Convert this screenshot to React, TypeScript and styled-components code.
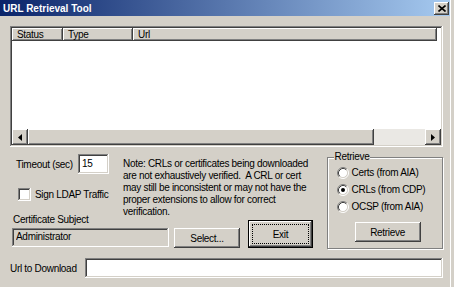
import React from "react";
import styled, { createGlobalStyle, css } from "styled-components";

const GlobalStyle = createGlobalStyle`
  html, body {
    margin: 0;
    padding: 0;
    background: #d4d0c8;
    overflow: hidden;
  }
  body {
    font-family: "Liberation Sans", Arial, sans-serif;
  }
  * {
    box-sizing: border-box;
  }
`;

const raised = css`
  background: #d4d0c8;
  box-shadow: inset -1px -1px #404040, inset 1px 1px #fff, inset -2px -2px #808080,
    inset 2px 2px #d4d0c8;
`;

const sunken = css`
  box-shadow: inset -1px -1px #fff, inset 1px 1px #808080, inset -2px -2px #d4d0c8,
    inset 2px 2px #404040;
`;

const Frame = styled.div`
  width: 454px;
  height: 287px;
  display: flex;
  background: #d4d0c8;
`;

const Window = styled.div`
  width: 451px;
  border-right: 1px solid #fff;
  display: flex;
  flex-direction: column;
`;

const TitleBar = styled.div`
  height: 16px;
  display: flex;
  align-items: center;
  justify-content: space-between;
  padding: 0 1px 0 3px;
  background: linear-gradient(90deg, #0a246a, #a6caf0);
`;

const TitleText = styled.span`
  color: #fff;
  font-weight: bold;
  font-size: 10px;
`;

const CloseButton = styled.div`
  ${raised};
  width: 15px;
  height: 13px;
  display: flex;
  align-items: center;
  justify-content: center;
`;

const Body = styled.div`
  flex: 1;
  display: flex;
  flex-direction: column;
  padding: 10px 7px 0 10px;
  font-size: 10px;
  letter-spacing: -0.3px;
  color: #000;
`;

const ListView = styled.div`
  ${sunken};
  background: #fff;
  height: 121px;
  padding: 2px;
  display: flex;
  flex-direction: column;
`;

const HeaderRow = styled.div`
  display: flex;
  height: 13px;
`;

const HeaderCell = styled.div<{ $w: number }>`
  ${raised};
  width: ${(p) => p.$w}px;
  padding-left: 5px;
  line-height: 13px;
  white-space: nowrap;
`;

const ListRows = styled.div`
  flex: 1;
`;

const HScroll = styled.div`
  display: flex;
  height: 16px;
`;

const ScrollButton = styled.div`
  ${raised};
  width: 16px;
  display: flex;
  align-items: center;
  justify-content: center;
`;

const Thumb = styled.div<{ $w: number }>`
  ${raised};
  width: ${(p) => p.$w}px;
`;

const Track = styled.div`
  flex: 1;
  background: #eae8e4;
`;

const Middle = styled.div`
  display: flex;
  margin-top: 4px;
  height: 98px;
`;

const LeftPane = styled.div`
  width: 314px;
  display: flex;
  flex-direction: column;
`;

const TopRow = styled.div`
  display: flex;
  height: 63px;
`;

const OptionsCol = styled.div`
  width: 113px;
  display: flex;
  flex-direction: column;
`;

const FieldRow = styled.div`
  display: flex;
  align-items: center;
  margin-top: 3px;
  padding-left: 6px;
`;

const FieldLabel = styled.span<{ $w: number }>`
  width: ${(p) => p.$w}px;
  white-space: nowrap;
`;

const TextBox = styled.input<{ $w?: number; $h?: number; $disabled?: boolean }>`
  ${sunken};
  border: none;
  outline: none;
  margin: 0;
  flex: ${(p) => (p.$w ? "none" : "1")};
  width: ${(p) => (p.$w ? `${p.$w}px` : "auto")};
  height: ${(p) => p.$h ?? 20}px;
  padding: 0 3px 2px 4px;
  font: inherit;
  letter-spacing: inherit;
  color: #000;
  background: ${(p) => (p.$disabled ? "#d4d0c8" : "#fff")};
`;

const CheckRow = styled.label`
  display: flex;
  align-items: center;
  margin-top: 14px;
  padding-left: 8px;
  white-space: nowrap;
`;

const CheckBox = styled.span`
  ${sunken};
  background: #fff;
  width: 13px;
  height: 13px;
  margin-right: 4px;
`;

const Note = styled.div`
  padding-top: 7px;
  line-height: 12px;
  white-space: pre;
`;

const BottomRow = styled.div`
  display: flex;
  align-items: flex-end;
  height: 34px;
`;

const SubjectCol = styled.div`
  display: flex;
  flex-direction: column;
  margin-left: 2px;
  margin-bottom: 1px;
  width: 157px;
`;

const SubjectLabel = styled.div`
  line-height: 12px;
  margin-bottom: 2px;
  padding-left: 1px;
`;

const Button = styled.div<{ $w: number; $h?: number; $ml?: number; $mt?: number }>`
  ${raised};
  width: ${(p) => p.$w}px;
  height: ${(p) => p.$h ?? 20}px;
  margin-left: ${(p) => p.$ml ?? 0}px;
  margin-top: ${(p) => p.$mt ?? 0}px;
  display: flex;
  align-items: center;
  justify-content: center;
  flex-shrink: 0;
`;

const DefaultButton = styled.div<{ $w: number; $h: number; $ml: number }>`
  width: ${(p) => p.$w}px;
  height: ${(p) => p.$h}px;
  margin-left: ${(p) => p.$ml}px;
  border: 1px solid #000;
  background: #d4d0c8;
  box-shadow: inset -1px -1px #404040, inset 1px 1px #fff, inset -2px -2px #808080;
  padding: 3px;
  display: flex;
  flex-shrink: 0;
`;

const FocusRing = styled.div`
  flex: 1;
  border: 1px dotted #000;
  display: flex;
  align-items: center;
  justify-content: center;
`;

const GroupBox = styled.fieldset`
  margin: 0 0 0 10px;
  padding: 0 0 0 9px;
  width: 119px;
  height: 98px;
  border: 1px solid #808080;
  box-shadow: inset 1px 1px #fff, 1px 1px #fff;
  display: flex;
  flex-direction: column;
  min-width: 0;
`;

const Legend = styled.legend`
  margin-left: -3px;
  padding: 0 1px;
  line-height: 12px;
  background: #d4d0c8;
`;

const RadioRow = styled.label`
  display: flex;
  align-items: center;
  height: 17px;
  white-space: nowrap;
  &:first-of-type {
    margin-top: 1px;
  }
`;

const RadioMark = styled.svg`
  width: 12px;
  height: 12px;
  margin-right: 3px;
  flex-shrink: 0;
`;

const UrlRow = styled.div`
  display: flex;
  align-items: center;
  margin-top: 9px;
`;

const Radio = ({ checked, label }: { checked?: boolean; label: string }) => (
  <RadioRow>
    <RadioMark viewBox="0 0 12 12">
      <circle cx="6" cy="6" r="4.5" fill="#fff" />
      <path d="M2.11 9.89A5.5 5.5 0 0 1 9.89 2.11" fill="none" stroke="#808080" />
      <path d="M9.89 2.11A5.5 5.5 0 0 1 2.11 9.89" fill="none" stroke="#fff" />
      <path d="M2.82 9.18A4.5 4.5 0 0 1 9.18 2.82" fill="none" stroke="#404040" />
      <path d="M9.18 2.82A4.5 4.5 0 0 1 2.82 9.18" fill="none" stroke="#d4d0c8" />
      {checked && <circle cx="6" cy="6" r="2" fill="#000" />}
    </RadioMark>
    {label}
  </RadioRow>
);

const Arrow = ({ dir }: { dir: "left" | "right" }) => (
  <svg width="4" height="7" viewBox="0 0 4 7">
    <polygon points={dir === "left" ? "4,0 4,7 0,3.5" : "0,0 0,7 4,3.5"} fill="#000" />
  </svg>
);

const App = () => {
  return (
    <Frame>
      <GlobalStyle />
      <Window>
        <TitleBar>
          <TitleText>URL Retrieval Tool</TitleText>
          <CloseButton>
            <svg width="8" height="7" viewBox="0 0 8 7">
              <path d="M0.5 0.5L7.5 6.5M7.5 0.5L0.5 6.5" stroke="#000" strokeWidth="1.6" />
            </svg>
          </CloseButton>
        </TitleBar>
        <Body>
          <ListView>
            <HeaderRow>
              <HeaderCell $w={51}>Status</HeaderCell>
              <HeaderCell $w={70}>Type</HeaderCell>
              <HeaderCell $w={304}>Url</HeaderCell>
            </HeaderRow>
            <ListRows />
            <HScroll>
              <ScrollButton>
                <Arrow dir="left" />
              </ScrollButton>
              <Thumb $w={346} />
              <Track />
              <ScrollButton>
                <Arrow dir="right" />
              </ScrollButton>
            </HScroll>
          </ListView>

          <Middle>
            <LeftPane>
              <TopRow>
                <OptionsCol>
                  <FieldRow>
                    <FieldLabel $w={62}>Timeout (sec)</FieldLabel>
                    <TextBox $w={31} defaultValue="15" readOnly />
                  </FieldRow>
                  <CheckRow>
                    <CheckBox />
                    Sign LDAP Traffic
                  </CheckRow>
                </OptionsCol>
                <Note>
                  {"Note: CRLs or certificates being downloaded\nare not exhaustively verified.  A CRL or cert\nmay still be inconsistent or may not have the\nproper extensions to allow for correct\nverification."}
                </Note>
              </TopRow>
              <BottomRow>
                <SubjectCol>
                  <SubjectLabel>Certificate Subject</SubjectLabel>
                  <TextBox $w={157} $h={19} $disabled defaultValue="Administrator" readOnly />
                </SubjectCol>
                <Button $w={66} $ml={5}>
                  Select...
                </Button>
                <DefaultButton $w={65} $h={28} $ml={8}>
                  <FocusRing>Exit</FocusRing>
                </DefaultButton>
              </BottomRow>
            </LeftPane>

            <GroupBox>
              <Legend>Retrieve</Legend>
              <Radio label="Certs (from AIA)" />
              <Radio checked label="CRLs (from CDP)" />
              <Radio label="OCSP (from AIA)" />
              <Button $w={66} $ml={18} $mt={7}>
                Retrieve
              </Button>
            </GroupBox>
          </Middle>

          <UrlRow>
            <FieldLabel $w={75}>Url to Download</FieldLabel>
            <TextBox readOnly />
          </UrlRow>
        </Body>
      </Window>
    </Frame>
  );
};

export default App;
